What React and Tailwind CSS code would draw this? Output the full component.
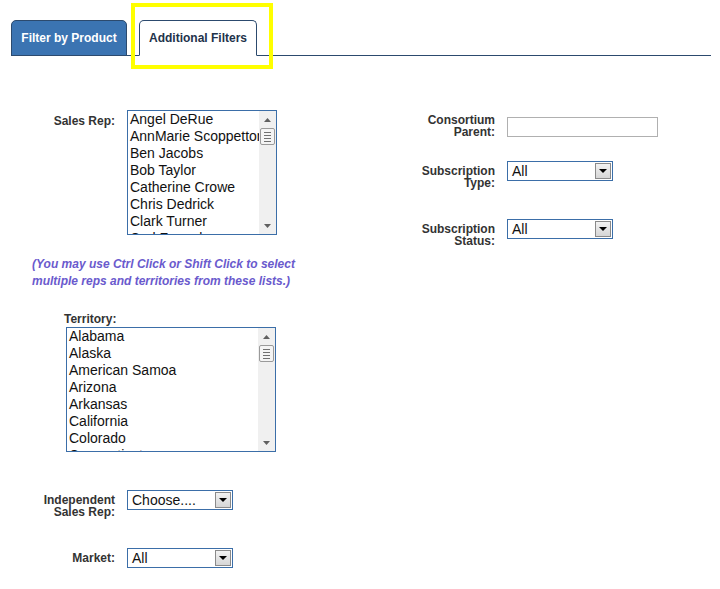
import React from 'react';

const salesReps = ['Angel DeRue', 'AnnMarie Scoppettone', 'Ben Jacobs', 'Bob Taylor', 'Catherine Crowe', 'Chris Dedrick', 'Clark Turner', 'Carl Fennel'];
const territories = ['Alabama', 'Alaska', 'American Samoa', 'Arizona', 'Arkansas', 'California', 'Colorado', 'Connecticut'];

const ArrowUp = () => (
  <svg width="7" height="4" viewBox="0 0 7 4"><path d="M0 4 L3.5 0 L7 4 Z" fill="#606060" /></svg>
);
const ArrowDown = () => (
  <svg width="7" height="4" viewBox="0 0 7 4"><path d="M0 0 L7 0 L3.5 4 Z" fill="#606060" /></svg>
);

// fake listbox with a classic scrollbar
const ListBox = ({ items, width }) => (
  <div className={`${width} h-[125px] border border-[#3b6ea8] bg-white flex overflow-hidden`}>
    <div className="flex-1 min-w-0 overflow-hidden pl-[2px]">
      {items.map((it) => (
        <div key={it} className="h-[17px] leading-[17px] text-[14px] text-[#111] whitespace-nowrap">{it}</div>
      ))}
    </div>
    <div className="w-[17px] bg-[#f0f0f0] flex flex-col items-center">
      <div className="h-[17px] flex items-center justify-center"><ArrowUp /></div>
      <div className="w-[15px] h-[17px] border border-[#9a9a9a] rounded-[2px] bg-[#f4f4f4] flex flex-col items-center justify-center gap-[2px]">
        <div className="w-[7px] h-px bg-[#707070]" />
        <div className="w-[7px] h-px bg-[#707070]" />
        <div className="w-[7px] h-px bg-[#707070]" />
        <div className="w-[7px] h-px bg-[#707070]" />
      </div>
      <div className="flex-1" />
      <div className="h-[17px] flex items-center justify-center"><ArrowDown /></div>
    </div>
  </div>
);

const Select = ({ value, width = 'w-[106px]' }) => (
  <div className={`${width} h-[20px] border border-[#3b6ea8] bg-white flex items-center`}>
    <span className="flex-1 pl-[4px] text-[14px] leading-[18px] text-[#111]">{value}</span>
    <div className="w-[16px] h-[16px] mr-[1px] border border-[#8a8a8a] bg-gradient-to-b from-[#f2f2f2] to-[#d6d6d6] flex items-center justify-center">
      <svg width="8" height="4" viewBox="0 0 8 4"><path d="M0 0 L8 0 L4 4 Z" fill="#000" /></svg>
    </div>
  </div>
);

const Label = ({ children, className = '' }) => (
  <div className={`w-[115px] text-right text-[12px] leading-[12px] font-bold text-[#333] ${className}`}>{children}</div>
);

export default function App() {
  return (
    <div className="w-[720px] h-[589px] bg-white relative font-['Liberation_Sans',Arial,sans-serif] overflow-hidden">
      {/* Tabs */}
      <div className="pt-[20px]">
        <div className="ml-[11px] w-[700px] border-b border-[#2c4a6e] flex items-end gap-[12px]">
          <div className="w-[116px] h-[36px] -mb-px rounded-t-[5px] bg-[#3b74b2] border border-[#2c4a6e] flex items-center justify-center text-white text-[12px] font-bold">
            Filter by Product
          </div>
          <div className="w-[118px] h-[36px] -mb-px rounded-t-[5px] bg-white border border-[#2c4a6e] border-b-white flex items-center justify-center text-[#22324a] text-[12px] font-bold">
            Additional Filters
          </div>
        </div>
      </div>

      {/* Highlight box */}
      <div className="absolute left-[131px] top-[3px] w-[142px] h-[66px] border-[4px] border-[#ffff00]" />

      <div className="flex">
        {/* Left column */}
        <div className="w-[380px]">
          <div className="flex mt-[54px]">
            <Label className="pt-[5px]">Sales Rep:</Label>
            <div className="ml-[12px]"><ListBox items={salesReps} width="w-[150px]" /></div>
          </div>

          <div className="mt-[21px] pl-[32px] text-[12px] leading-[17px] font-bold italic text-[#6a5acd]">
            (You may use Ctrl Click or Shift Click to select<br />
            multiple reps and territories from these lists.)
          </div>

          <div className="mt-[22px] pl-[64px] text-[12px] leading-[14px] font-bold text-[#333]">Territory:</div>
          <div className="mt-px pl-[66px]"><ListBox items={territories} width="w-[210px]" /></div>

          <div className="flex mt-[38px]">
            <Label className="pt-[4px]">Independent<br />Sales Rep:</Label>
            <div className="ml-[12px]"><Select value="Choose...." /></div>
          </div>

          <div className="flex mt-[30px]">
            <Label className="pt-[4px]">Market:</Label>
            <div className="ml-[12px]"><Select value="All" /></div>
          </div>
        </div>

        {/* Right column */}
        <div className="flex-1">
          <div className="flex items-start mt-[58px]">
            <Label>Consortium<br />Parent:</Label>
            <div className="ml-[12px] mt-[3px] w-[151px] h-[20px] border border-[#b0b0b0] bg-white" />
          </div>
          <div className="flex items-start mt-[23px]">
            <Label className="pt-[4px]">Subscription<br />Type:</Label>
            <div className="ml-[12px]"><Select value="All" /></div>
          </div>
          <div className="flex items-start mt-[30px]">
            <Label className="pt-[4px]">Subscription<br />Status:</Label>
            <div className="ml-[12px]"><Select value="All" /></div>
          </div>
        </div>
      </div>
    </div>
  );
}
